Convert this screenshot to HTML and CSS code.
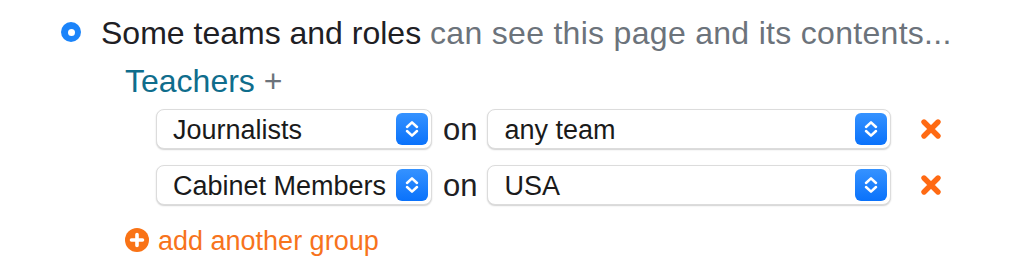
FILE: index.html
```html
<!DOCTYPE html>
<html>
<head>
<meta charset="utf-8">
<link rel="stylesheet" href="styles.css">
</head>
<body>
<div class="panel">
  <div class="option">
    <span class="radio"><span class="radio-dot"></span></span>
    <span class="option-text"><span class="strong">Some teams and roles</span> <span class="muted">can see this page and its contents...</span></span>
  </div>
  <div class="group">
    <div class="group-title"><span class="team">Teachers</span> <span class="plus">+</span></div>
    <div class="rows">
      <div class="row">
        <div class="select select-role"><span class="select-label">Journalists</span><span class="stepper"><svg width="16" height="22" viewBox="0 0 16 22"><path d="M3 9 L8 4.3 L13 9 M3 13 L8 17.7 L13 13" fill="none" stroke="#fff" stroke-width="2.5" stroke-linecap="round" stroke-linejoin="round"/></svg></span></div>
        <span class="on">on</span>
        <div class="select select-team"><span class="select-label">any team</span><span class="stepper"><svg width="16" height="22" viewBox="0 0 16 22"><path d="M3 9 L8 4.3 L13 9 M3 13 L8 17.7 L13 13" fill="none" stroke="#fff" stroke-width="2.5" stroke-linecap="round" stroke-linejoin="round"/></svg></span></div>
        <span class="remove"><svg width="22" height="22" viewBox="0 0 22 22"><path d="M4 4 L18 18 M18 4 L4 18" stroke="#ff6a13" stroke-width="5.4" stroke-linecap="round"/></svg></span>
      </div>
      <div class="row">
        <div class="select select-role"><span class="select-label">Cabinet Members</span><span class="stepper"><svg width="16" height="22" viewBox="0 0 16 22"><path d="M3 9 L8 4.3 L13 9 M3 13 L8 17.7 L13 13" fill="none" stroke="#fff" stroke-width="2.5" stroke-linecap="round" stroke-linejoin="round"/></svg></span></div>
        <span class="on">on</span>
        <div class="select select-team"><span class="select-label">USA</span><span class="stepper"><svg width="16" height="22" viewBox="0 0 16 22"><path d="M3 9 L8 4.3 L13 9 M3 13 L8 17.7 L13 13" fill="none" stroke="#fff" stroke-width="2.5" stroke-linecap="round" stroke-linejoin="round"/></svg></span></div>
        <span class="remove"><svg width="22" height="22" viewBox="0 0 22 22"><path d="M4 4 L18 18 M18 4 L4 18" stroke="#ff6a13" stroke-width="5.4" stroke-linecap="round"/></svg></span>
      </div>
    </div>
    <div class="add"><svg class="add-icon" width="24" height="24" viewBox="0 0 24 24"><circle cx="12" cy="12" r="12" fill="#f97316"/><path d="M12 6.5 V17.5 M6.5 12 H17.5" stroke="#fff" stroke-width="3.6" stroke-linecap="round"/></svg><span>add another group</span></div>
  </div>
</div>
</body>
</html>
```
FILE: styles.css
```css
html, body {
  margin: 0;
  padding: 0;
  background: #ffffff;
}
body {
  font-family: "Liberation Sans", Arial, sans-serif;
  color: #1e2024;
}
.panel {
  padding-top: 13px;
  padding-left: 61px;
}
.option {
  display: flex;
  align-items: center;
  gap: 20px;
  height: 40px;
  font-size: 32px;
  line-height: 40px;
  white-space: nowrap;
}
.radio {
  width: 20px;
  height: 20px;
  border-radius: 50%;
  background: #1b84fa;
  display: flex;
  align-items: center;
  justify-content: center;
  flex: none;
  margin-top: -2px;
}
.radio-dot {
  width: 7px;
  height: 7px;
  border-radius: 50%;
  background: #ffffff;
}
.strong { color: #1e2024; }
.muted { color: #6c737b; letter-spacing: 0.3px; }
.group {
  padding-left: 64px;
  padding-top: 8px;
}
.group-title {
  font-size: 32px;
  line-height: 40px;
  height: 40px;
}
.team { color: #0f6d8c; }
.plus { color: #6c737b; }
.rows {
  padding-top: 8px;
  padding-left: 31px;
  display: flex;
  flex-direction: column;
  gap: 16px;
}
.row {
  display: flex;
  align-items: center;
  height: 40px;
}
.select {
  box-sizing: border-box;
  height: 40px;
  background: #ffffff;
  border: 1px solid #dcdcdc;
  border-radius: 8px;
  box-shadow: 0 1px 1.5px rgba(0,0,0,0.18);
  display: flex;
  align-items: center;
  justify-content: space-between;
  padding-left: 16px;
  padding-right: 3px;
  font-size: 27px;
  color: #1a1a1a;
}
.select-label {
  line-height: 40px;
  padding-top: 2px;
  white-space: nowrap;
}
.select-role { width: 276px; }
.select-team { width: 404px; }
.stepper {
  width: 32px;
  height: 32px;
  border-radius: 6px;
  background: linear-gradient(#3592ff, #0a72fb);
  display: flex;
  align-items: center;
  justify-content: center;
  flex: none;
}
.on {
  font-size: 31px;
  line-height: 40px;
  padding-top: 2px;
  margin: 0 10px 0 11px;
  color: #1e2024;
}
.remove {
  margin-left: 29px;
  display: flex;
  align-items: center;
  width: 22px;
  height: 22px;
}
.add {
  margin-top: 18px;
  display: flex;
  align-items: center;
  gap: 9px;
  font-size: 27px;
  line-height: 36px;
  color: #f7731c;
  white-space: nowrap;
}
.add-icon { flex: none; margin-top: -2px; }
```
